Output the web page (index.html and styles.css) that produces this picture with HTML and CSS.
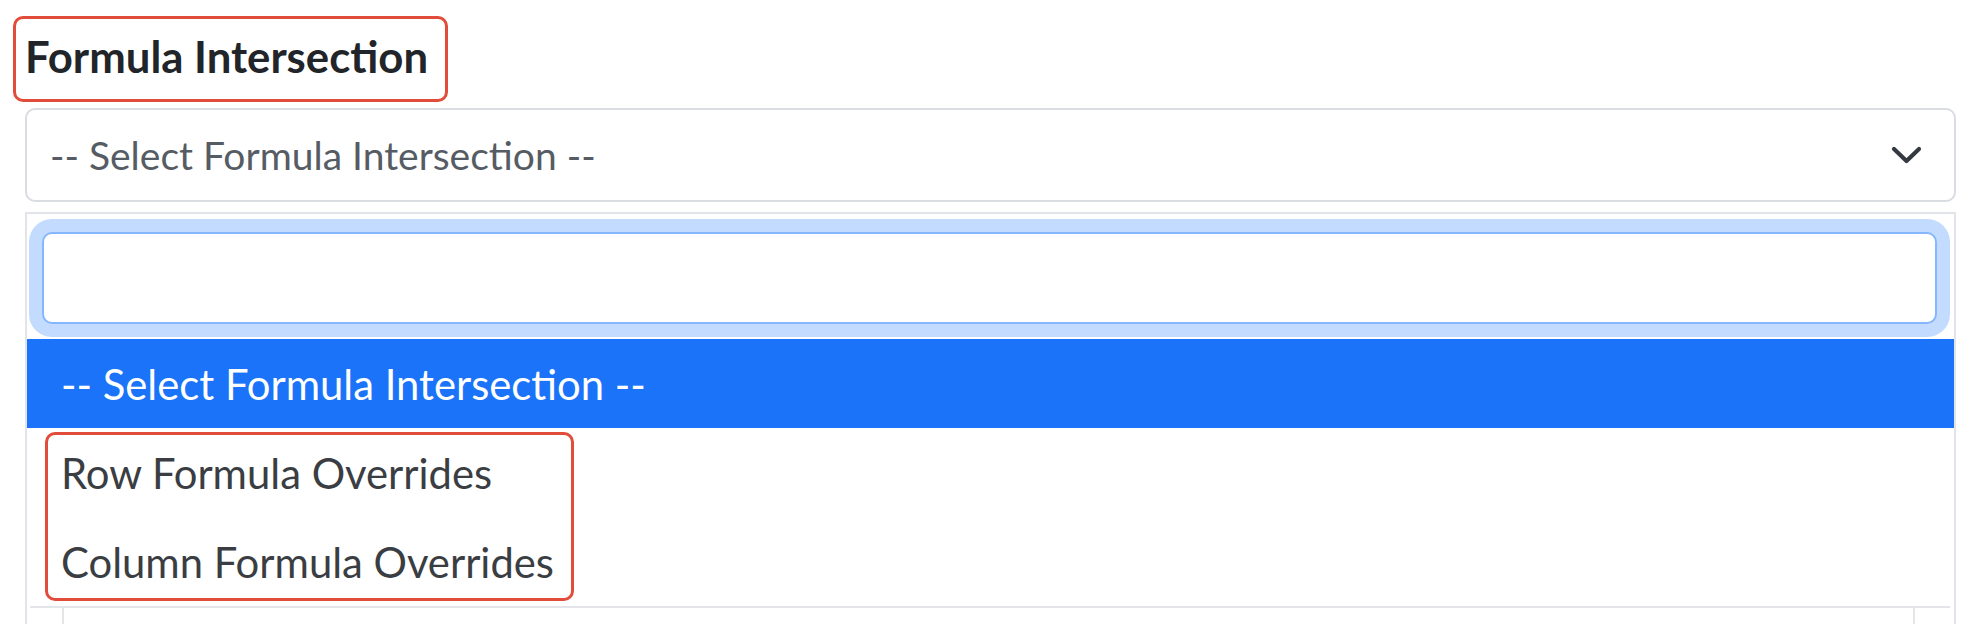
FILE: index.html
```html
<!DOCTYPE html>
<html lang="en">
<head>
<meta charset="utf-8">
<title>Formula Intersection</title>
<link rel="stylesheet" href="styles.css">
</head>
<body>
<div class="page">
  <label class="field-label">Formula Intersection</label>
  <div class="select">
    <span class="select-value">-- Select Formula Intersection --</span>
    <svg class="chevron" width="31" height="18" viewBox="0 0 31 18" aria-hidden="true">
      <polyline points="3,3 15.5,15 28,3" fill="none" stroke="#343a40" stroke-width="4.2" stroke-linecap="round" stroke-linejoin="round"/>
    </svg>
  </div>
  <div class="dropdown">
    <div class="search-wrap">
      <input class="search" type="text" aria-label="Search">
    </div>
    <ul class="options">
      <li class="option highlighted">-- Select Formula Intersection --</li>
      <li class="option-group">
        <ul class="options-inner">
          <li class="option">Row Formula Overrides</li>
          <li class="option">Column Formula Overrides</li>
        </ul>
        <span class="annot-box"></span>
      </li>
    </ul>
    <div class="footer-row">
      <div class="footer-cell"></div>
    </div>
  </div>
</div>
</body>
</html>
```
FILE: styles.css
```css
html, body {
  margin: 0;
  padding: 0;
  background: #ffffff;
  height: 624px;
  overflow: hidden;
}
body {
  font-family: Lato, "Noto Sans", sans-serif;
  color: #212529;
}
.page {
  padding: 16px 22px 0 13px;
}
.field-label {
  display: inline-block;
  font-weight: 700;
  font-size: 43.7px;
  line-height: 52px;
  color: #212529;
  border: 3px solid #e24c3a;
  border-radius: 10px;
  padding: 11px 17px 17px 9px;
}
.select {
  margin: 6px 0 0 12px;
  height: 94px;
  box-sizing: border-box;
  border: 2px solid #d9dce1;
  border-radius: 10px;
  display: flex;
  align-items: center;
  justify-content: space-between;
  padding: 0 32px 0 23px;
}
.select-value {
  font-size: 39px;
  color: #565c63;
}
.chevron {
  display: block;
}
.dropdown {
  margin: 10px 0 0 12px;
  border: 2px solid #e1e4e8;
  border-bottom: none;
  height: 420px;
  box-sizing: border-box;
}
.search-wrap {
  padding: 18px 17px 15px 15px;
}
.search {
  display: block;
  width: 100%;
  height: 92px;
  box-sizing: border-box;
  border: 2px solid #86b7fe;
  border-radius: 10px;
  box-shadow: 0 0 0 13px rgba(13, 110, 253, 0.25);
  outline: none;
  background: #fff;
  margin: 0;
}
.options, .options-inner {
  list-style: none;
  margin: 0;
  padding: 0;
}
.option {
  height: 89px;
  display: flex;
  align-items: center;
  padding-left: 34px;
  font-size: 41.8px;
  color: #3a3e43;
}
.option.highlighted {
  background: #1a73f8;
  color: #ffffff;
}
.option-group {
  position: relative;
}
.annot-box {
  position: absolute;
  left: 18px;
  top: 4px;
  width: 529px;
  height: 169px;
  box-sizing: border-box;
  border: 3px solid #e24c3a;
  border-radius: 10px;
}
.footer-row {
  margin: 0 4px 0 3px;
  border-top: 2px solid #e3e5e9;
  height: 40px;
}
.footer-cell {
  margin: 0 35px 0 32px;
  height: 100%;
  border-left: 2px solid #e3e5e9;
  border-right: 2px solid #e3e5e9;
}
```
